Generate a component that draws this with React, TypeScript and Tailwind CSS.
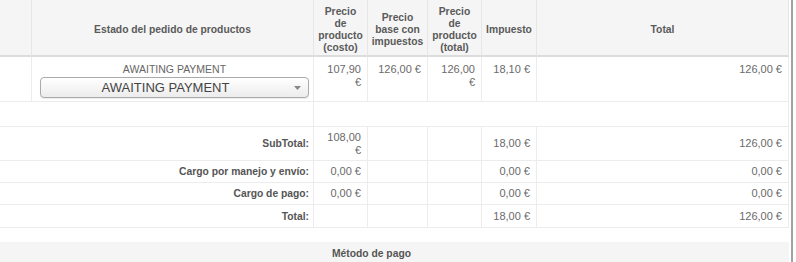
import React from "react";

const head = "bg-[#f5f5f5] border-r border-[#e6e6e6] border-b-2 border-b-[#dcdcdc] font-bold text-[10.3px] text-[#5a5a5a] text-center align-middle px-[2px] pt-[4px] leading-[12px]";
const border = "border-r border-b border-[#ececec]";
const cell = `${border} text-[#6a6a6a] px-[6px] leading-[13px]`;

type TotalRow = {
  label: string;
  cost: React.ReactNode;
  tax: string;
  total: string;
  h: string;
};

const totals: TotalRow[] = [
  { label: "SubTotal:", cost: <>108,00<br />€</>, tax: "18,00 €", total: "126,00 €", h: "h-[34px]" },
  { label: "Cargo por manejo y envío:", cost: "0,00 €", tax: "0,00 €", total: "0,00 €", h: "h-[22px]" },
  { label: "Cargo de pago:", cost: "0,00 €", tax: "0,00 €", total: "0,00 €", h: "h-[22px]" },
  { label: "Total:", cost: "", tax: "18,00 €", total: "126,00 €", h: "h-[23px]" },
];

function StatusSelect() {
  return (
    <div className="relative ml-[8px] mr-[4px] mt-[1px] h-[21px] rounded-[4px] border border-[#aaaaaa] bg-gradient-to-b from-white to-[#ececec] shadow-[0_1px_1px_rgba(0,0,0,0.08)]">
      <div className="pr-[18px] text-center text-[13px] leading-[19px] text-[#444]">AWAITING PAYMENT</div>
      <svg className="absolute right-[7px] top-[8px]" width="7" height="4" viewBox="0 0 7 4">
        <path d="M0 0h7L3.5 4z" fill="#888" />
      </svg>
    </div>
  );
}

export default function App() {
  return (
    <div className="h-[262px] w-[796px] overflow-hidden bg-white font-['Liberation_Sans',Arial,sans-serif] text-[11px]">
      <div className="ml-[-46px] flex">
        <div className="w-[835px]">
          <table className="w-[835px] table-fixed border-separate border-spacing-0">
            <colgroup>
              <col className="w-[78px]" />
              <col className="w-[282px]" />
              <col className="w-[54px]" />
              <col className="w-[60px]" />
              <col className="w-[54px]" />
              <col className="w-[55px]" />
              <col className="w-[252px]" />
            </colgroup>
            <thead>
              <tr>
                <th className={`${head} h-[57px]`}></th>
                <th className={head}>Estado del pedido de productos</th>
                <th className={head}>Precio<br />de<br />producto<br />(costo)</th>
                <th className={head}>Precio<br />base con<br />impuestos</th>
                <th className={head}>Precio<br />de<br />producto<br />(total)</th>
                <th className={head}>Impuesto</th>
                <th className={head}>Total</th>
              </tr>
            </thead>
            <tbody>
              <tr>
                <td className={`${cell} h-[45px]`}></td>
                <td className={`${border} pt-[6px] align-top`}>
                  <div className="pl-[4px] text-center text-[10.5px] leading-[13px] text-[#666]">AWAITING PAYMENT</div>
                  <StatusSelect />
                </td>
                <td className={`${cell} pt-[6px] text-right align-top`}>107,90 €</td>
                <td className={`${cell} pt-[6px] text-right align-top`}>126,00 €</td>
                <td className={`${cell} pt-[6px] text-right align-top`}>126,00 €</td>
                <td className={`${cell} pt-[6px] text-right align-top`}>18,10 €</td>
                <td className={`${cell} pt-[6px] text-right align-top`}>126,00 €</td>
              </tr>
              <tr>
                <td colSpan={2} className={`${cell} h-[25px]`}></td>
                <td colSpan={5} className={cell}></td>
              </tr>
              {totals.map((r) => (
                <tr key={r.label}>
                  <td colSpan={2} className={`${border} ${r.h} pr-[4px] text-right align-middle text-[10.3px] font-bold leading-[13px] text-[#555]`}>
                    {r.label}
                  </td>
                  <td className={`${cell} text-right align-middle`}>{r.cost}</td>
                  <td className={cell}></td>
                  <td className={cell}></td>
                  <td className={`${cell} text-right align-middle`}>{r.tax}</td>
                  <td className={`${cell} text-right align-middle`}>{r.total}</td>
                </tr>
              ))}
            </tbody>
          </table>
          <div className="h-[14px]" />
          <div className="h-[24px] bg-[#f5f5f5] pt-[5px] text-center text-[10.3px] font-bold leading-[13px] text-[#555]">
            Método de pago
          </div>
        </div>
        <div className="w-[2px]" />
        <div className="h-[262px] w-[2px] bg-[#a3a3a3]" />
      </div>
    </div>
  );
}
